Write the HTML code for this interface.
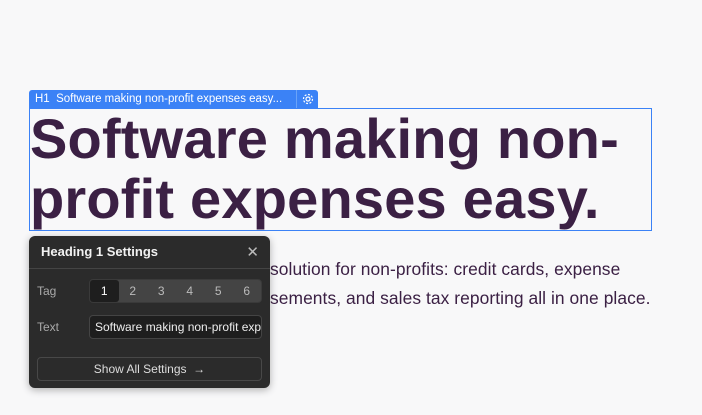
<!DOCTYPE html>
<html><head><meta charset="utf-8"><style>
*{margin:0;padding:0;box-sizing:border-box}
body{width:702px;height:415px;background:#f8f8f9;position:relative;overflow:hidden;font-family:"Liberation Sans",sans-serif}
.h1{position:absolute;left:30px;top:109px;font-size:56px;font-weight:bold;color:#3b2044;line-height:60px;letter-spacing:0.2px;white-space:nowrap}
.box{position:absolute;left:29px;top:108px;width:623px;height:123px;border:1px solid #3b82f6}
.lbl{position:absolute;left:29px;top:90px;height:18px;width:289px;background:#3b82f6;border-radius:3px 3px 0 0;color:#fff;font-size:11.5px;line-height:18px;padding-left:6px;white-space:nowrap}
.lbl .g{position:absolute;right:0;top:0;width:22px;height:18px;border-left:1px solid #6aa3f8}
.p{position:absolute;left:270px;font-size:17.4px;letter-spacing:0.07px;color:#3b2044;white-space:nowrap}
.panel{position:absolute;left:29px;top:236px;width:241px;height:152px;background:#2b2b2b;border-radius:6px;box-shadow:0 2px 8px rgba(0,0,0,.3);color:#ddd}
.hd{height:33px;border-bottom:1px solid #444;font-size:13px;font-weight:bold;color:#f2f2f2;line-height:32px;padding-left:12px}
.x{position:absolute;right:11px;top:9px;color:#bbb;font-size:15px;line-height:15px}
.lab{position:absolute;left:8px;font-size:12px;color:#aaa}
.seg{position:absolute;left:60px;top:43px;width:173px;height:24px;background:#444;border-radius:4px;display:flex;border:1px solid #3a3a3a}
.seg div{flex:1;text-align:center;font-size:12px;line-height:22px;color:#bbb}
.seg div.a{background:#1e1e1e;color:#fff;border-radius:3px}
.inp{position:absolute;left:60px;top:79px;width:173px;height:24px;background:#1e1e1e;border:1px solid #444;border-radius:4px;font-size:12px;line-height:22px;padding-left:5px;color:#eee;overflow:hidden;white-space:nowrap}
.btn{position:absolute;left:8px;top:121px;width:225px;height:24px;border:1px solid #484848;border-radius:4px;text-align:center;font-size:12px;line-height:22px;color:#ddd}
</style></head><body>
<div class="h1">Software making non-<br>profit expenses easy.</div>
<div class="box"></div>
<div class="lbl">H1&nbsp; Software making non-profit expenses easy...<div class="g"><svg width="22" height="18" viewBox="0 0 22 18"><circle cx="11" cy="9" r="2" fill="none" stroke="#fff" stroke-width="1.2"/><circle cx="11" cy="9" r="4.5" fill="none" stroke="#fff" stroke-width="1.2" stroke-dasharray="2 1.5"/></svg></div></div>
<div class="p" style="top:259px">solution for non-profits: credit cards, expense</div>
<div class="p" style="top:288px">sements, and sales tax reporting all in one place.</div>
<div class="panel">
<div class="hd">Heading 1 Settings</div><div class="x">✕</div>
<div class="lab" style="top:48px">Tag</div>
<div class="seg"><div class="a">1</div><div>2</div><div>3</div><div>4</div><div>5</div><div>6</div></div>
<div class="lab" style="top:84px">Text</div>
<div class="inp">Software making non-profit expenses easy.</div>
<div class="btn">Show All Settings &nbsp;→</div>
</div>
</body></html>
